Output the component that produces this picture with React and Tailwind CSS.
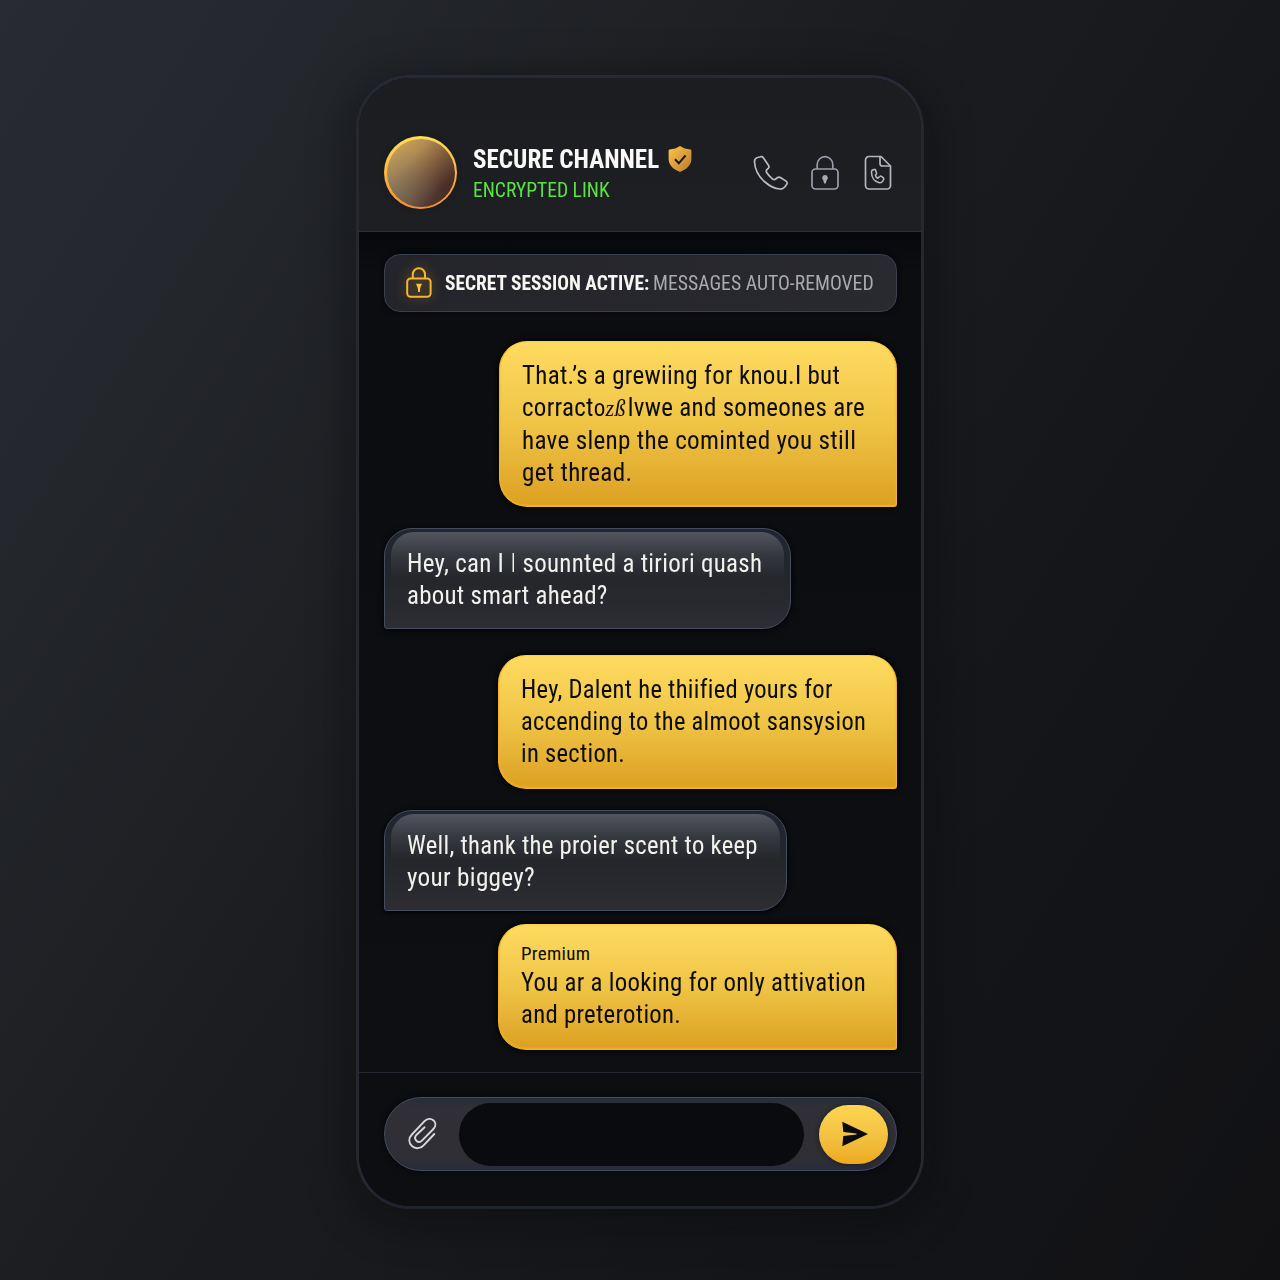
import { useLayoutEffect, useRef, useState } from "react";

// One line of condensed text, squeezed horizontally to the given width.
function Line({ width, className = "", children }) {
  const ref = useRef(null);
  const [scale, setScale] = useState(0.88);
  useLayoutEffect(() => {
    const measure = () => {
      if (ref.current && ref.current.offsetWidth) setScale(width / ref.current.offsetWidth);
    };
    measure();
    document.fonts?.ready.then(measure);
  }, [width]);
  return (
    <div className={`whitespace-nowrap ${className}`} style={{ width }}>
      <span ref={ref} className="inline-block origin-left" style={{ transform: `scaleX(${scale})` }}>
        {children}
      </span>
    </div>
  );
}

function Sent({ className, children }) {
  return (
    <div
      className={`self-end rounded-[28px] rounded-br-[3px] border border-[#f2b428] border-t-[#fbd04c] bg-linear-to-b from-[#fedb60] via-[#efc445] to-[#dca020] pt-[16.5px] pl-[22px] text-[26px] leading-[32.3px] tracking-[0.3px] text-[#0d0c08] shadow-[0_0_5px_1px_#020306,inset_0_-1px_2px_#f8b020] ${className}`}
    >
      {children}
    </div>
  );
}

function Received({ className, children }) {
  return (
    <div
      className={`relative self-start rounded-[28px] rounded-bl-[3px] border border-[#444c5e] bg-linear-to-b from-[#202530] via-[#24262a] to-[#2d2d33] pt-[17.5px] pl-[22px] text-[26px] leading-[32.3px] tracking-[0.3px] text-[#f3f1ec] shadow-[0_1px_5px_1px_#030408] ${className}`}
    >
      <div className="absolute inset-x-[6px] top-[3px] h-[46px] rounded-t-[23px] bg-linear-to-b from-[#53555f] via-[#3b3d44]/80 to-transparent" />
      <div className="relative">{children}</div>
    </div>
  );
}

function Shield() {
  return (
    <svg width="24" height="28" viewBox="0 0 24 28" fill="none">
      <defs>
        <linearGradient id="shield" x1="0" y1="0" x2="1" y2="1">
          <stop stopColor="#ffc44a" />
          <stop offset="1" stopColor="#bb7b2c" />
        </linearGradient>
      </defs>
      <path d="M12 1C9.200 3 5.500 4.300 1.500 4.400 .9 4.400.6 4.800.6 5.400v8.400c0 6 4.200 10.400 11.400 13.200 7.200-2.800 11.400-7.200 11.400-13.200V5.400c0-.6-.3-1-.9-1C18.500 4.300 14.800 3 12 1Z" fill="url(#shield)" />
      <path d="m7 14.300 3.800 4 6.700-7.800" stroke="#17171b" strokeWidth="2" />
    </svg>
  );
}

function Phone() {
  return (
    <svg width="36" height="36" viewBox="0 0 36 36" fill="none" stroke="#b9bac3" strokeWidth="1.700" strokeLinejoin="round">
      <path d="M7.800 1.700 4.600 2.500C2.700 3 1.500 4.400 1.500 6.500c.3 8 4 15 10.500 20.500 4.500 4 9.500 6.600 14.800 7 2 .2 3.700-.5 4.900-2l1.900-2.600c.9-1.300.7-2.500-.6-3.300l-5.200-3.300c-1.300-.8-2.500-.7-3.500 0l-1.600 1.200c-1 .8-2.200.7-3.300-.2-2.300-1.800-4.200-3.800-5.700-6.300-.7-1.200-.6-2.200.4-3.100l1.100-1c.9-.9 1-1.900.4-3L10.700 3.300c-.6-1.200-1.500-1.900-2.900-1.600Z" />
    </svg>
  );
}

function Lock() {
  return (
    <svg width="28" height="36" viewBox="0 0 28 36" fill="none" stroke="#9c9dab" strokeWidth="1.700">
      <rect x="1" y="14" width="26" height="20" rx="3.500" />
      <path d="M6.200 14V9.500a7.800 7.800 0 0 1 15.600 0V14" />
      <path d="M14 20a2.900 2.900 0 0 0-1.700 5.200l.8 3.300h1.600l1-3.300A2.900 2.900 0 0 0 14 20Z" fill="#aaaab4" stroke="none" />
    </svg>
  );
}

function PhoneFile() {
  return (
    <svg width="28" height="36" viewBox="0 0 28 36" fill="none" stroke="#b5b5bf" strokeWidth="1.700" strokeLinejoin="round">
      <path d="M17 1.500H5A3.500 3.500 0 0 0 1.500 5v25.500A3.500 3.500 0 0 0 5 34h18a3.500 3.500 0 0 0 3.500-3.500V11Z" />
      <path d="M16 1.500v7a2.500 2.500 0 0 0 2.500 2.500h7.700" />
      <path d="m8.200 15.300 2-.8c.6-.2 1.100 0 1.300.6l1 3c.2.600 0 1-.4 1.400l-.7.700c.4 1.500 1.100 2.400 2.400 3l2-1.700c.5-.5 1.200-.5 1.700-.1l1.900 1.500c.5.400.6.900.3 1.500l-1.200 2c-.8 1.200-2 1.600-3.700 1.100-4.300-1-7.200-5-7.300-10 0-1.200.2-2.100.8-2.500Z" strokeWidth="1.600" />
    </svg>
  );
}

function GoldLock() {
  return (
    <svg width="26" height="32" viewBox="0 0 26 32" fill="none" stroke="#f6b62c" strokeWidth="2" className="drop-shadow-[0_0_6px_rgba(246,176,44,0.5)]">
      <rect x="1.200" y="11.500" width="23.400" height="18.300" rx="3.500" />
      <path d="M6.800 11.500V7.300a6 6 0 0 1 12.200 0v4.200" />
      <path d="M10 16.800h6l-1.800 4.200-.3 4h-1.700l-.4-4Z" fill="#fdc240" stroke="none" />
    </svg>
  );
}

function Clip() {
  return (
    <svg width="32" height="34" viewBox="0 0 32 34" fill="none" stroke="#d7d8dc" strokeWidth="1.900" strokeLinecap="round" strokeLinejoin="round">
      <path d="M27.300 17 16.600 28.300C13.500 31.800 8.400 32.200 4.900 29 1.500 25.600 1.500 21 4.900 17.500L17.500 4.200C20.200 1.400 24 1.200 26.600 3.400 29 5.800 29 9.300 26.400 12L15.200 23.400C13.400 25.200 11 25.200 9.300 23.700 7.700 22 7.800 19.600 9.600 17.700L17.600 10.300" />
    </svg>
  );
}

export default function App() {
  return (
    <div className="flex h-[1280px] w-[1280px] items-start justify-center overflow-hidden bg-[linear-gradient(122deg,#282b34_0%,#23262b_18%,#1c1d20_42%,#16171a_65%,#131417_82%,#111114_100%)] pt-[75px] font-['Roboto_Condensed',Roboto,sans-serif]">
      <div className="flex h-[1134px] w-[568px] flex-col overflow-hidden rounded-[54px] border-[3px] border-[#26272f] border-t-[#282936] border-b-[#20242e] bg-[#0d0e11] shadow-[0_8px_40px_8px_rgba(5,6,9,0.35)]">
        <header className="flex h-[154px] shrink-0 items-start border-b border-[#303238] bg-linear-to-b from-[#1b1d20] to-[#1e1f22] pl-[25px]">
          <div className="mt-[58px] size-[73px] shrink-0 rounded-full bg-linear-to-b from-[#ffdd55] to-[#fb8c25] p-[2.500px] shadow-[0_0_5px_#101c27]">
            <div className="size-full rounded-full bg-[radial-gradient(circle_at_10%_85%,rgba(112,116,108,0.55)_0%,transparent_60%),linear-gradient(135deg,#cfa757_8%,#b08a52_32%,#7d5a3d_54%,#4d2f28_76%,#3c2a2a_95%)]" />
          </div>
          <div className="mt-[65px] ml-4">
            <div className="flex items-center gap-[9px]">
              <Line width={186} className="text-[26px] leading-8 font-bold text-[#faf9f8]">SECURE CHANNEL</Line>
              <Shield />
            </div>
            <Line width={137} className="mt-[2px] text-[20px] leading-[26px] text-[#5be344]">ENCRYPTED LINK</Line>
          </div>
          <div className="mt-[77px] ml-auto flex pr-[29px]">
            <Phone />
            <div className="ml-[22px]"><Lock /></div>
            <div className="ml-[25px]"><PhoneFile /></div>
          </div>
        </header>

        <main className="flex h-[841px] shrink-0 flex-col border-b border-[#252833] bg-[linear-gradient(180deg,#07080c_0%,#0c0d10_5%,#0e0f12_100%)] pt-[22px] pr-[24px] pl-[25px]">
          <div className="flex h-[58px] shrink-0 items-center rounded-2xl border border-[#3a404d] bg-linear-to-r from-[#24242b] to-[#292a2f] pl-[21px] text-[20px] leading-6 shadow-[0_0_5px_#040508]">
            <GoldLock />
            <Line width={204} className="ml-[13px] font-bold text-[#f8f6f1]">SECRET SESSION ACTIVE:</Line>
            <Line width={221} className="ml-[4px] text-[#aaa9ad]">MESSAGES AUTO-REMOVED</Line>
          </div>

          <Sent className="mt-[29px] h-[166px] w-[398px] shrink-0 leading-[32.2px]!">
            <Line width={318}>That.’s a grewiing for knou.I but</Line>
            <Line width={343}>
              corract<span className="text-[24px]">o</span>
              <span className="font-['Liberation_Serif'] text-[23px] leading-none italic">zß</span>
              <span className="ml-[2px]">lvwe and someones are</span>
            </Line>
            <Line width={334}>have slenp the cominted you still</Line>
            <Line width={110}>get thread.</Line>
          </Sent>

          <Received className="mt-[21px] h-[101px] w-[407px] shrink-0">
            <Line width={355}>Hey, can I <span className="font-light">I</span> sounnted a tiriori quash</Line>
            <Line width={201}>about smart ahead?</Line>
          </Received>

          <Sent className="mt-[26px] h-[134px] w-[399px] shrink-0">
            <Line width={312}>Hey, Dalent he thiified yours for</Line>
            <Line width={345}>accending to the almoot sansysion</Line>
            <Line width={104}>in section.</Line>
          </Sent>

          <Received className="mt-[21px] h-[101px] w-[403px] shrink-0">
            <Line width={351}>Well, thank the proier scent to keep</Line>
            <Line width={128}>your biggey?</Line>
          </Received>

          <Sent className="mt-[13px] h-[126px] w-[399px] shrink-0">
            <Line width={69} className="h-[24px] text-[19px] leading-[23px]">Premium</Line>
            <Line width={345}>You ar a looking for only attivation</Line>
            <Line width={160}>and preterotion.</Line>
          </Sent>
        </main>

        <footer className="flex-1 bg-[#0d0e12] pt-[24px] pr-[24px] pl-[25px]">
          <div className="flex h-[74px] items-center rounded-full border border-[#454c60] bg-[linear-gradient(180deg,#272d39_0%,#303036_12%,#2e2e34_85%,#292b3d_100%)] pl-[22px] shadow-[0_0_5px_#040508]">
            <Clip />
            <div className="ml-[20px] h-[63px] w-[345px] rounded-full bg-[#0a0b0e]" />
            <button className="ml-[15px] flex h-[59px] w-[69px] items-center justify-center rounded-[30px] bg-linear-to-b from-[#ffd450] via-[#f4c344] to-[#eda91d] shadow-[0_0_5px_#191b25]">
              <svg width="28" height="26" viewBox="0 0 28 26" className="ml-[2px]">
                <path d="M1.300.8 27 13 1.300 25.200 2.300 15l13.200-1.400v-1.200L2.300 11Z" fill="#090b10" />
              </svg>
            </button>
          </div>
        </footer>
      </div>
    </div>
  );
}
